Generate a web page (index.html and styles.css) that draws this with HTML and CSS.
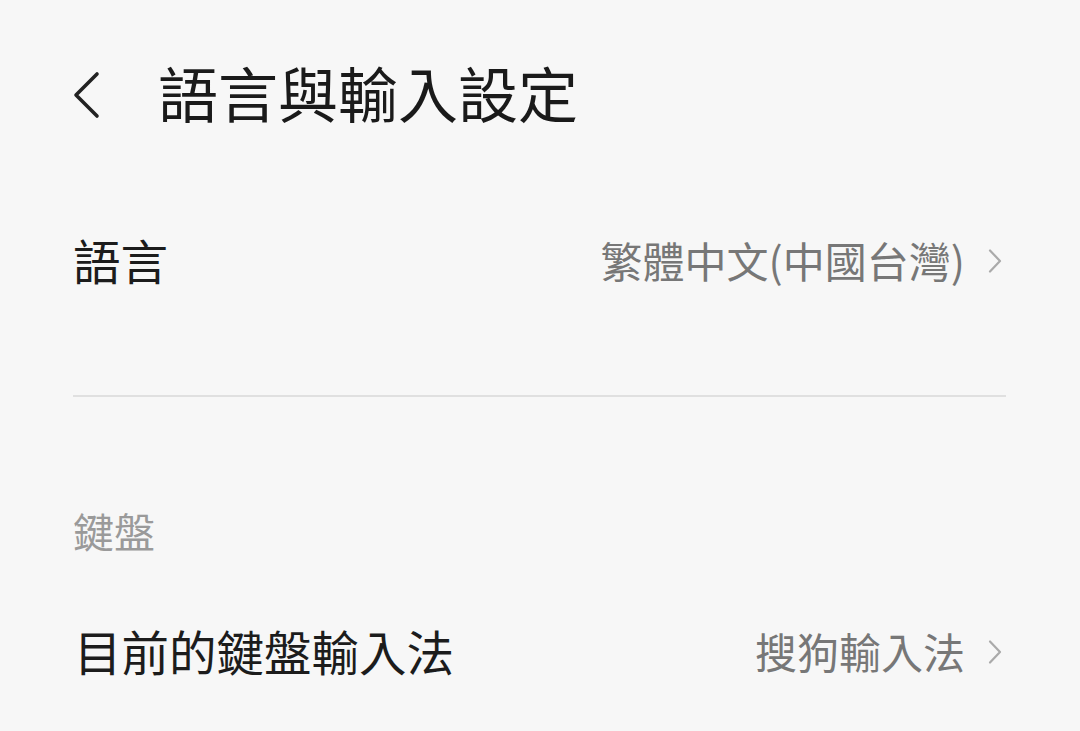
FILE: index.html
```html
<!DOCTYPE html>
<html lang="zh-Hant">
<head>
<meta charset="utf-8">
<link rel="stylesheet" href="styles.css">
</head>
<body>
<div class="page">
  <header class="header">
    <svg class="back" width="28" height="48" viewBox="0 0 28 48"><path d="M24 3 L3 24 L24 45" fill="none" stroke="#222" stroke-width="3.6" stroke-linecap="round" stroke-linejoin="round"/></svg>
    <h1 class="title">語言與輸入設定</h1>
  </header>
  <div class="row row-lang">
    <span class="label">語言</span>
    <span class="value">繁體中文(中國台灣)</span>
    <svg class="chev" width="16" height="26" viewBox="0 0 16 26"><path d="M3 2.5 L13 13 L3 23.5" fill="none" stroke="#aaa" stroke-width="2.2" stroke-linecap="round" stroke-linejoin="round"/></svg>
  </div>
  <div class="divider"></div>
  <div class="section"><span class="section-text">鍵盤</span></div>
  <div class="row row-kb">
    <span class="label label-kb">目前的鍵盤輸入法</span>
    <span class="value value-kb">搜狗輸入法</span>
    <svg class="chev" width="16" height="26" viewBox="0 0 16 26"><path d="M3 2.5 L13 13 L3 23.5" fill="none" stroke="#aaa" stroke-width="2.2" stroke-linecap="round" stroke-linejoin="round"/></svg>
  </div>
</div>
</body>
</html>
```
FILE: styles.css
```css
html, body {
  margin: 0;
  padding: 0;
  background: #f7f7f7;
}
body {
  font-family: "Noto Sans CJK TC", "Noto Sans CJK SC", "Noto Sans", sans-serif;
  color: #1c1c1c;
  width: 1080px;
  height: 731px;
  overflow: hidden;
}
.page {
  padding: 0 74px 0 73px;
}
.header {
  height: 192px;
  display: flex;
  align-items: center;
}
.back {
  display: block;
  margin-bottom: 2px;
}
.title {
  margin: 0 0 0 57px;
  padding-bottom: 8px;
  font-size: 60px;
  font-weight: 400;
  line-height: 1;
  color: #1a1a1a;
}
.row {
  display: flex;
  align-items: center;
}
.row-lang {
  height: 144px;
}
.row-kb {
  height: 162px;
}
.label {
  font-size: 47.5px;
  line-height: 1;
  padding-bottom: 8px;
  flex: 1;
}
.label-kb {
  font-size: 47.5px;
  margin-left: 1px;
}
.value {
  font-size: 42px;
  line-height: 1;
  padding-bottom: 8px;
  color: #777;
  margin-right: 22px;
}
.chev {
  display: block;
  margin-right: 3px;
  margin-bottom: 6px;
}
.divider {
  margin-top: 59px;
  height: 2px;
  background: #e0e0e0;
}
.section {
  margin-top: 97px;
  height: 80px;
  display: flex;
  align-items: center;
}
.section-text {
  font-size: 41px;
  line-height: 1;
  padding-bottom: 7px;
  color: #9a9a9a;
}
```
